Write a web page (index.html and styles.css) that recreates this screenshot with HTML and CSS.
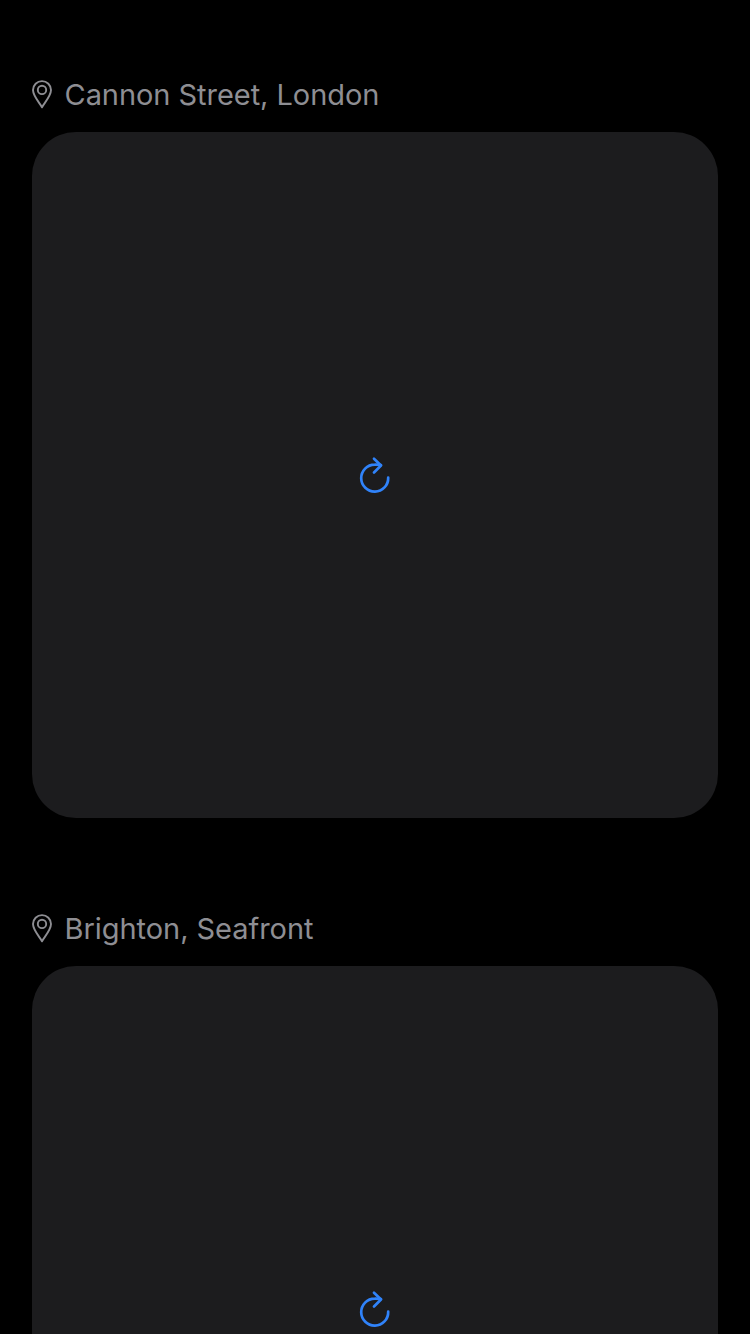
FILE: index.html
```html
<!DOCTYPE html>
<html lang="en">
<head>
<meta charset="utf-8">
<title>Locations</title>
<link rel="stylesheet" href="styles.css">
</head>
<body>
<main class="feed">
  <section class="place">
    <header class="place-header">
      <svg class="pin" viewBox="0 0 20 30" aria-hidden="true"><path d="M10 27.3C8 23.3 1 16.3 1 10.1a9 9 0 0 1 18 0C19 16.3 12 23.3 10 27.3Z"/><circle cx="10" cy="9.9" r="4.2"/></svg>
      <h2 class="place-name">Cannon Street, London</h2>
    </header>
    <div class="card">
      <svg class="reload" viewBox="0 0 32 38" role="img" aria-label="Reload"><path d="M29.2 21.7A13.5 13.5 0 1 1 15.7 8.6C18.3 8.5 20 8.7 22 9"/><path d="M15 2.8L22 9.5L15 16.5"/></svg>
    </div>
  </section>
  <section class="place">
    <header class="place-header">
      <svg class="pin" viewBox="0 0 20 30" aria-hidden="true"><path d="M10 27.3C8 23.3 1 16.3 1 10.1a9 9 0 0 1 18 0C19 16.3 12 23.3 10 27.3Z"/><circle cx="10" cy="9.9" r="4.2"/></svg>
      <h2 class="place-name">Brighton, Seafront</h2>
    </header>
    <div class="card">
      <svg class="reload" viewBox="0 0 32 38" role="img" aria-label="Reload"><path d="M29.2 21.7A13.5 13.5 0 1 1 15.7 8.6C18.3 8.5 20 8.7 22 9"/><path d="M15 2.8L22 9.5L15 16.5"/></svg>
    </div>
  </section>
</main>
</body>
</html>
```
FILE: styles.css
```css
* { box-sizing: border-box; }
body {
  margin: 0;
  background: #000;
  font-family: Inter, "Liberation Sans", sans-serif;
}
.feed {
  display: flex;
  flex-direction: column;
  gap: 92px;
  height: 1334px;
  padding: 76px 32px 0;
  overflow: hidden;
}
.place {
  display: flex;
  flex: none;
  flex-direction: column;
  gap: 18px;
}
.place-header {
  display: flex;
  align-items: center;
  gap: 12.5px;
  height: 38px;
}
.pin {
  width: 20px;
  height: 30px;
  fill: none;
  stroke: #8e8e93;
  stroke-width: 1.9;
  stroke-linejoin: round;
}
.place-name {
  margin: 0;
  color: #8e8e93;
  font-size: 29px;
  font-weight: 400;
  letter-spacing: -0.05px;
  line-height: 38px;
  white-space: nowrap;
}
.card {
  display: flex;
  align-items: center;
  justify-content: center;
  height: 686px;
  border-radius: 44px;
  background: #1c1c1e;
}
.reload {
  width: 32px;
  height: 38px;
  fill: none;
  stroke: #3083fa;
  stroke-width: 2.7;
  stroke-linecap: round;
  stroke-linejoin: round;
}
```
